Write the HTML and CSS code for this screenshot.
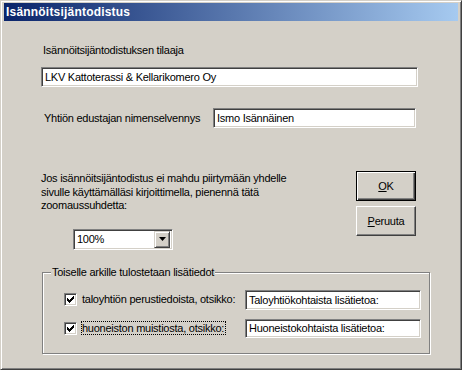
FILE: index.html
```html
<!DOCTYPE html>
<html>
<head>
<meta charset="utf-8">
<link rel="stylesheet" href="styles.css">
</head>
<body>
<div class="window">
  <div class="titlebar">Isännöitsijäntodistus</div>
  <div class="content">
    <div class="label1">Isännöitsijäntodistuksen tilaaja</div>
    <div class="textbox tb1">LKV Kattoterassi &amp; Kellarikomero Oy</div>
    <div class="row2">
      <span class="label2">Yhtiön edustajan nimenselvennys</span>
      <div class="textbox tb2">Ismo Isännäinen</div>
    </div>
    <div class="row3">
      <div class="leftcol">
        <p class="para">Jos isännöitsijäntodistus ei mahdu piirtymään yhdelle<br>sivulle käyttämälläsi kirjoittimella, pienennä tätä<br>zoomaussuhdetta:</p>
        <div class="combo">
          <span class="combo-text">100%</span>
          <span class="combo-btn"><svg width="7" height="4" viewBox="0 0 7 4"><path d="M0 0h7L3.5 4z" fill="#000"/></svg></span>
        </div>
      </div>
      <div class="rightcol">
        <div class="btn default"><span class="btn-in"><u>O</u>K</span></div>
        <div class="btn"><span class="btn-in"><u>P</u>eruuta</span></div>
      </div>
    </div>
    <div class="group">
      <div class="legend">Toiselle arkille tulostetaan lisätiedot</div>
      <div class="crow crow1">
        <span class="check"><svg width="7" height="7" viewBox="0 0 7 7"><path d="M0 2h1v1h1v1h1v-1h1v-1h1v-1h1v-1h1v3h-1v1h-1v1h-1v1h-1v1h-1v-1h-1v-1h-1v-1h-1z" fill="#000"/></svg></span>
        <span class="clabel"><span class="ctext">taloyhtiön perustiedoista, otsikko:</span></span>
        <div class="textbox tb3">Taloyhtiökohtaista lisätietoa:</div>
      </div>
      <div class="crow crow2">
        <span class="check"><svg width="7" height="7" viewBox="0 0 7 7"><path d="M0 2h1v1h1v1h1v-1h1v-1h1v-1h1v-1h1v3h-1v1h-1v1h-1v1h-1v1h-1v-1h-1v-1h-1v-1h-1z" fill="#000"/></svg></span>
        <span class="clabel"><span class="ctext focus">huoneiston muistiosta, otsikko:</span></span>
        <div class="textbox tb4">Huoneistokohtaista lisätietoa:</div>
      </div>
    </div>
  </div>
</div>
</body>
</html>
```

FILE: styles.css
```css
* { box-sizing: border-box; }
html, body { margin: 0; padding: 0; background: #d4d0c8; }
body {
  font-family: "Liberation Sans", Arial, sans-serif;
  font-size: 11px;
  letter-spacing: -0.25px;
  color: #000;
}
.window {
  width: 462px;
  height: 370px;
  background: #d4d0c8;
  border: 1px solid;
  border-color: #d4d0c8 #404040 #404040 #d4d0c8;
  box-shadow: inset 1px 1px #fff, inset -1px -1px #808080;
  padding: 2px 3px 0 2px;
  overflow: hidden;
}
.titlebar {
  height: 18px;
  background: linear-gradient(to right, #0a246a, #a6caf0);
  color: #fff;
  font-weight: bold;
  font-family: "Liberation Sans", Arial, sans-serif;
  font-size: 12px;
  letter-spacing: 0.2px;
  line-height: 19px;
  padding-left: 2px;
  margin-left: 1px;
}
.content {
  padding-left: 38px;
}
.label1 {
  margin-top: 23px;
  margin-left: 2px;
  line-height: 13px;
}
.textbox {
  background: #fff;
  height: 20px;
  border: 1px solid;
  border-color: #808080 #fff #fff #808080;
  box-shadow: inset 1px 1px #404040, inset -1px -1px #d4d0c8;
  padding: 0 3px;
  line-height: 18px;
  white-space: nowrap;
  overflow: hidden;
}
.tb1 {
  margin-top: 10px;
  width: 377px;
}
.row2 {
  display: flex;
  align-items: center;
  margin-top: 21px;
}
.label2 {
  margin-left: 3px;
  width: 169px;
}
.tb2 { width: 203px; }
.row3 {
  display: flex;
  margin-top: 43px;
}
.leftcol { width: 315px; }
.para {
  margin: 1px 0 0 0;
  line-height: 13.5px;
}
.combo {
  margin-top: 16px;
  margin-left: 32px;
  width: 100px;
  height: 21px;
  background: #fff;
  border: 1px solid;
  border-color: #808080 #fff #fff #808080;
  box-shadow: inset 1px 1px #404040, inset -1px -1px #d4d0c8;
  display: flex;
  align-items: center;
  padding: 2px;
}
.combo-text {
  flex: 1;
  padding-left: 1px;
}
.combo-btn {
  width: 16px;
  height: 17px;
  background: #d4d0c8;
  border: 1px solid;
  border-color: #d4d0c8 #404040 #404040 #d4d0c8;
  box-shadow: inset 1px 1px #fff, inset -1px -1px #808080;
  display: flex;
  align-items: center;
  justify-content: center;
}
.rightcol {
  display: flex;
  flex-direction: column;
  gap: 5px;
}
.btn {
  width: 60px;
  height: 30px;
  border: 1px solid;
  border-color: #fff #404040 #404040 #fff;
  box-shadow: inset -1px -1px #808080, inset 1px 1px #d4d0c8;
  display: flex;
  align-items: center;
  justify-content: center;
}
.btn.default {
  border: 1px solid #000;
  box-shadow: inset 1px 1px #fff, inset -1px -1px #404040, inset -2px -2px #808080;
}
.btn u { text-decoration: underline; }
.group {
  margin: 22px 0 0 1px;
  width: 388px;
  height: 82px;
  border: 1px solid #808080;
  box-shadow: 1px 1px #fff, inset 1px 1px #fff;
  padding: 0 0 0 21px;
}
.legend {
  width: max-content;
  margin: -7px 0 0 -13px;
  padding: 0 1px;
  line-height: 13px;
  background: #d4d0c8;
}
.crow {
  display: flex;
  align-items: center;
  height: 20px;
}
.crow1 { margin-top: 11px; }
.crow2 { margin-top: 9px; }
.check {
  width: 13px;
  height: 13px;
  background: #fff;
  border: 1px solid;
  border-color: #808080 #fff #fff #808080;
  box-shadow: inset 1px 1px #404040, inset -1px -1px #d4d0c8;
  display: flex;
  align-items: center;
  justify-content: center;
  margin-right: 4px;
}
.clabel {
  width: 164px;
  padding-left: 1px;
  line-height: 13px;
}
.focus {
  outline: 1px dotted #000;
  outline-offset: 0;
  padding-right: 1px;
}
.tb3 { width: 176px; }
.tb4 { width: 176px; height: 19px; line-height: 17px; }
```
